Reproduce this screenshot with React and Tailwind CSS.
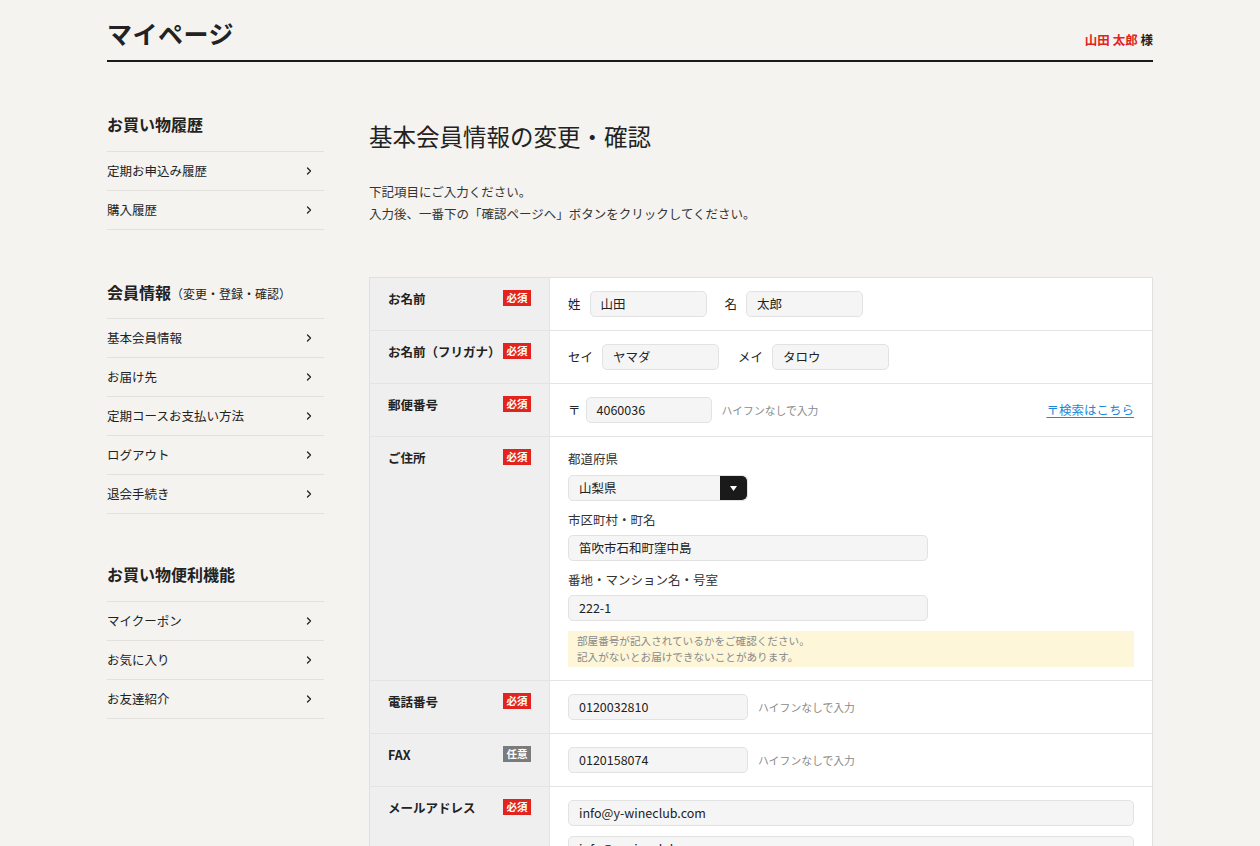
import { ChevronRight } from 'lucide-react';

const sideNav = [
	{ title: 'お買い物履歴', items: [ '定期お申込み履歴', '購入履歴' ] },
	{
		title: '会員情報',
		sub: '（変更・登録・確認）',
		items: [ '基本会員情報', 'お届け先', '定期コースお支払い方法', 'ログアウト', '退会手続き' ],
	},
	{ title: 'お買い物便利機能', items: [ 'マイクーポン', 'お気に入り', 'お友達紹介' ] },
];

const Badge = ( { optional } ) => (
	<span
		className={ `inline-flex h-[16px] w-[28px] items-center justify-center text-[10.5px] font-bold leading-none text-white ${
			optional ? 'bg-[#7b7b7b]' : 'bg-[#e3231e]'
		}` }
	>
		{ optional ? '任意' : '必須' }
	</span>
);

const Input = ( { value, className = '' } ) => (
	<div
		className={ `flex h-[26px] items-center rounded-[5px] border border-[#e2e2e2] bg-[#f5f5f5] px-[10px] text-[12.5px] text-[#222] ${ className }` }
	>
		{ value }
	</div>
);

// gray helper text next to an input
const Hint = ( { children } ) => (
	<span className="ml-[10px] text-[10.8px] leading-[16px] text-[#8a8a8a]">{ children }</span>
);

const Row = ( { label, optional, children } ) => (
	<div className="flex border-t border-[#e4e4e4] first:border-t-0">
		<div className="flex w-[180px] shrink-0 items-start justify-between border-r border-[#e4e4e4] bg-[#efefef] pl-[18px] pr-[18px] pt-[12px]">
			<span className="text-[12.5px] font-bold leading-[18px] text-[#222]">{ label }</span>
			<Badge optional={ optional } />
		</div>
		<div className="flex-1 bg-white px-[18px] pb-[13px] pt-[13px]">{ children }</div>
	</div>
);

const FieldLabel = ( { children, className = '' } ) => (
	<div className={ `text-[12.5px] leading-[18px] text-[#333] ${ className }` }>{ children }</div>
);

export default function App() {
	return (
		<div className="min-h-[846px] bg-[#f4f3f0] font-['Noto_Sans_CJK_JP','Noto_Sans',sans-serif] text-[#222]">
			<div className="mx-auto w-[1046px]">
				{/* Header */}
				<header className="flex items-end justify-between border-b-2 border-[#1a1a1a] pb-[9px] pt-[16px]">
					<h1 className="text-[25px] font-bold leading-[35px] tracking-[0.5px]">マイページ</h1>
					<div className="pb-[1px] text-[12.5px] font-bold">
						<span className="text-[#e3231e]">山田 太郎</span> 様
					</div>
				</header>

				<div className="flex gap-[45px]">
					{/* Sidebar */}
					<aside className="w-[217px] shrink-0 pt-[50px]">
						{ sideNav.map( ( section, i ) => (
							<div key={ section.title } className={ i === 1 ? 'mt-[50px]' : i === 2 ? 'mt-[48px]' : '' }>
								<h2
									className={ `flex h-[24px] items-baseline text-[16px] font-bold leading-[24px] ${
										section.sub ? 'mb-[14px]' : 'mb-[15px]'
									}` }
								>
									{ section.title }
									{ section.sub && (
										<span className="text-[12px] font-normal leading-[24px]">{ section.sub }</span>
									) }
								</h2>
								<ul className="border-t border-[#e2e1de]">
									{ section.items.map( ( item ) => (
										<li
											key={ item }
											className="flex h-[39px] items-center justify-between border-b border-[#e2e1de] pr-[9px] text-[12.5px]"
										>
											<span>{ item }</span>
											<ChevronRight size={ 12 } strokeWidth={ 2.5 } className="text-[#222]" />
										</li>
									) ) }
								</ul>
							</div>
						) ) }
					</aside>

					{/* Main */}
					<main className="flex-1 pt-[57px]">
						<h2 className="text-[23.5px] leading-[34px] text-[#222]">基本会員情報の変更・確認</h2>
						<p className="mt-[28px] text-[12.5px] leading-[22px] text-[#333]">
							下記項目にご入力ください。
							<br />
							入力後、一番下の「確認ページへ」ボタンをクリックしてください。
						</p>

						<div className="mt-[52px] border border-[#e0e0e0]">
							<Row label="お名前">
								<div className="flex items-center text-[12.5px]">
									<span className="mr-[9px]">姓</span>
									<Input value="山田" className="w-[117px]" />
									<span className="ml-[18px] mr-[9px]">名</span>
									<Input value="太郎" className="w-[117px]" />
								</div>
							</Row>
							<Row label="お名前（フリガナ）">
								<div className="flex items-center text-[12.5px]">
									<span className="mr-[9px]">セイ</span>
									<Input value="ヤマダ" className="w-[117px]" />
									<span className="ml-[19px] mr-[9px]">メイ</span>
									<Input value="タロウ" className="w-[117px]" />
								</div>
							</Row>
							<Row label="郵便番号">
								<div className="flex items-center text-[12.5px]">
									<span className="mr-[5px]">〒</span>
									<Input value="4060036" className="w-[126px]" />
									<Hint>ハイフンなしで入力</Hint>
									<a className="ml-auto text-[#1c8ad8] underline underline-offset-2">〒検索はこちら</a>
								</div>
							</Row>
							<Row label="ご住所">
								<FieldLabel>都道府県</FieldLabel>
								<div className="mt-[7px] flex h-[26px] w-[180px] overflow-hidden rounded-[5px] border border-[#e2e2e2] bg-[#f5f5f5]">
									<span className="flex flex-1 items-center px-[10px] text-[12.5px]">山梨県</span>
									<span className="flex w-[27px] items-center justify-center rounded-r-[5px] bg-[#1a1a1a]">
										<svg width="7" height="5" viewBox="0 0 7 5">
											<path d="M0 0h7L3.5 5z" fill="#fff" />
										</svg>
									</span>
								</div>
								<FieldLabel className="mt-[10px]">市区町村・町名</FieldLabel>
								<Input value="笛吹市石和町窪中島" className="mt-[6px] w-[360px]" />
								<FieldLabel className="mt-[10px]">番地・マンション名・号室</FieldLabel>
								<Input value="222-1" className="mt-[6px] w-[360px]" />
								<div className="mt-[10px] bg-[#fdf6d8] px-[9px] py-[2px] text-[10.6px] leading-[16px] text-[#8a8a8a]">
									部屋番号が記入されているかをご確認ください。
									<br />
									記入がないとお届けできないことがあります。
								</div>
							</Row>
							<Row label="電話番号">
								<div className="flex items-center">
									<Input value="0120032810" className="w-[180px]" />
									<Hint>ハイフンなしで入力</Hint>
								</div>
							</Row>
							<Row label="FAX" optional>
								<div className="flex items-center">
									<Input value="0120158074" className="w-[180px]" />
									<Hint>ハイフンなしで入力</Hint>
								</div>
							</Row>
							<Row label="メールアドレス">
								<Input value="info@y-wineclub.com" className="w-full" />
								<Input value="info@y-wineclub.com" className="mt-[10px] w-full" />
							</Row>
						</div>
					</main>
				</div>
			</div>
		</div>
	);
}
